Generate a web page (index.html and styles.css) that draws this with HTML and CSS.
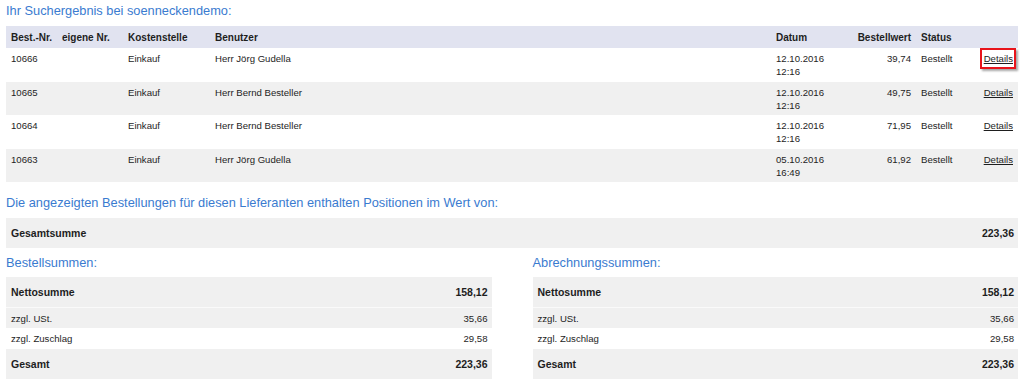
FILE: index.html
```html
<!DOCTYPE html>
<html lang="de">
<head>
<meta charset="utf-8">
<title>Suchergebnis</title>
<link rel="stylesheet" href="styles.css">
</head>
<body>
<h2 class="heading heading-top">Ihr Suchergebnis bei soenneckendemo:</h2>
<table class="orders">
  <colgroup>
    <col class="c-nr"><col class="c-own"><col class="c-ks"><col class="c-user"><col class="c-date"><col class="c-val"><col class="c-status"><col class="c-det">
  </colgroup>
  <thead>
    <tr>
      <th>Best.-Nr.</th><th>eigene Nr.</th><th>Kostenstelle</th><th>Benutzer</th><th>Datum</th><th class="num">Bestellwert</th><th>Status</th><th></th>
    </tr>
  </thead>
  <tbody>
    <tr>
      <td>10666</td><td></td><td>Einkauf</td><td>Herr Jörg Gudella</td><td>12.10.2016<br>12:16</td><td class="num">39,74</td><td>Bestellt</td><td class="num"><a class="details marked" href="#">Details</a></td>
    </tr>
    <tr class="alt">
      <td>10665</td><td></td><td>Einkauf</td><td>Herr Bernd Besteller</td><td>12.10.2016<br>12:16</td><td class="num">49,75</td><td>Bestellt</td><td class="num"><a class="details" href="#">Details</a></td>
    </tr>
    <tr>
      <td>10664</td><td></td><td>Einkauf</td><td>Herr Bernd Besteller</td><td>12.10.2016<br>12:16</td><td class="num">71,95</td><td>Bestellt</td><td class="num"><a class="details" href="#">Details</a></td>
    </tr>
    <tr class="alt">
      <td>10663</td><td></td><td>Einkauf</td><td>Herr Jörg Gudella</td><td>05.10.2016<br>16:49</td><td class="num">61,92</td><td>Bestellt</td><td class="num"><a class="details" href="#">Details</a></td>
    </tr>
  </tbody>
</table>

<h2 class="heading heading-mid">Die angezeigten Bestellungen für diesen Lieferanten enthalten Positionen im Wert von:</h2>
<div class="total-bar">
  <span>Gesamtsumme</span><span>223,36</span>
</div>

<div class="sums">
  <section class="sum-block">
    <h2 class="heading heading-sum">Bestellsummen:</h2>
    <div class="sum-table">
      <div class="sum-row big"><span>Nettosumme</span><span>158,12</span></div>
      <div class="sum-row small shaded"><span>zzgl. USt.</span><span>35,66</span></div>
      <div class="sum-row small"><span>zzgl. Zuschlag</span><span>29,58</span></div>
      <div class="sum-row big"><span>Gesamt</span><span>223,36</span></div>
    </div>
  </section>
  <section class="sum-block">
    <h2 class="heading heading-sum">Abrechnungssummen:</h2>
    <div class="sum-table">
      <div class="sum-row big"><span>Nettosumme</span><span>158,12</span></div>
      <div class="sum-row small shaded"><span>zzgl. USt.</span><span>35,66</span></div>
      <div class="sum-row small"><span>zzgl. Zuschlag</span><span>29,58</span></div>
      <div class="sum-row big"><span>Gesamt</span><span>223,36</span></div>
    </div>
  </section>
</div>
</body>
</html>
```

FILE: styles.css
```css
* { box-sizing: border-box; }

body {
  margin: 0;
  padding: 0 6px;
  background: #ffffff;
  color: #1e1e1e;
  font-family: "Liberation Sans", Arial, sans-serif;
  font-size: 9.6px;
}

.heading {
  margin: 0;
  font-weight: normal;
  font-size: 12.8px;
  line-height: 18px;
  color: #3a7bd0;
}

.heading-top { margin: 2px 0 6px; }
.heading-mid { margin: 12px 0 6px; }
.heading-sum { margin: 6px 0 5px; }

.orders {
  width: 100%;
  border-collapse: collapse;
  table-layout: fixed;
}

.c-nr { width: 51px; }
.c-own { width: 66px; }
.c-ks { width: 87px; }
.c-user { width: 561px; }
.c-date { width: 75px; }
.c-val { width: 70px; }
.c-status { width: 50px; }
.c-det { width: 52px; }

.orders th {
  height: 22px;
  padding: 0 5px;
  background: #e1e3f0;
  font-size: 10px;
  font-weight: bold;
  text-align: left;
  vertical-align: middle;
  white-space: nowrap;
}

.orders td {
  height: 33.5px;
  padding: 4px 5px 3px;
  line-height: 13px;
  vertical-align: top;
  white-space: nowrap;
}

.orders tr.alt td { background: #f0f0f0; }

.orders .num { text-align: right; }

.details {
  color: #1e1e1e;
  text-decoration: underline;
}

.marked { position: relative; }

.marked::after {
  content: "";
  position: absolute;
  left: -4px;
  right: -3px;
  top: -5px;
  bottom: -5px;
  border: 2px solid #e8141b;
  box-shadow: 2px 2px 2px rgba(0, 0, 0, 0.35);
}

.total-bar {
  display: flex;
  justify-content: space-between;
  align-items: center;
  height: 30px;
  padding: 0 4px 0 5px;
  background: #f0f0f0;
  font-size: 10.5px;
  font-weight: bold;
}

.sums {
  display: flex;
  gap: 41px;
}

.sum-block { flex: 1; }

.sum-table {
  display: flex;
  flex-direction: column;
}

.sum-row {
  display: flex;
  justify-content: space-between;
  align-items: center;
  padding: 0 4px 0 5px;
}

.sum-row.big {
  height: 30px;
  background: #f0f0f0;
  font-size: 10.5px;
  font-weight: bold;
}

.sum-row.small {
  height: 21px;
  font-size: 9.6px;
}

.sum-row.shaded {
  background: #f0f0f0;
  border-top: 1px solid #fafafa;
}
```
